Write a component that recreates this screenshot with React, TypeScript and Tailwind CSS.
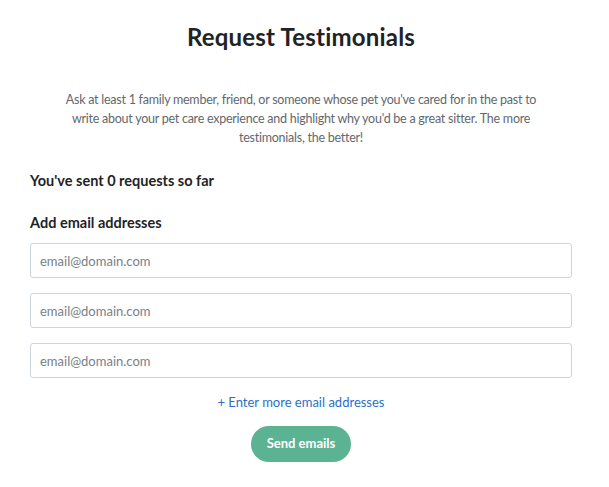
import React from 'react';

const App: React.FC = () => {
  return (
    <div className="min-h-[487px] w-[609px] bg-white font-['Lato','Noto_Sans',sans-serif] text-[#1f2326]">
      <div className="ml-[30px] w-[542px] pt-[22px]">
        <h1 className="text-center text-[24px] font-bold leading-[30px] tracking-[0.2px]">Request Testimonials</h1>

        <p className="mx-auto mt-[38px] w-[480px] text-center text-[12.5px] leading-[19px] tracking-[-0.25px] text-[#62686e]">
          Ask at least 1 family member, friend, or someone whose pet you've cared for in the past to write about your pet care experience and highlight why you'd be a great sitter. The more testimonials, the better!
        </p>

        <div className="mt-[24px] text-[14.5px] font-bold leading-[20px]">You've sent 0 requests so far</div>

        <div className="mt-[22px] text-[14.5px] font-bold leading-[20px]">Add email addresses</div>

        <div className="mt-[10px] flex flex-col gap-[15px]">
          {[0, 1, 2].map((i) => (
            <input
              key={i}
              type="email"
              placeholder="email@domain.com"
              className="h-[35px] w-full rounded-[3px] border border-[#cdd5dc] px-[9px] text-[13px] text-[#1f2326] outline-none placeholder:text-[#7a8087]"
            />
          ))}
        </div>

        <div className="mt-[15px] text-center text-[13px] leading-[18px] text-[#2a6fc9]">+ Enter more email addresses</div>

        <div className="mt-[15px] flex justify-center">
          <button className="h-[36px] w-[100px] rounded-full bg-[#5bb394] text-[13px] font-bold text-white">Send emails</button>
        </div>
      </div>
    </div>
  );
};

export default App;
